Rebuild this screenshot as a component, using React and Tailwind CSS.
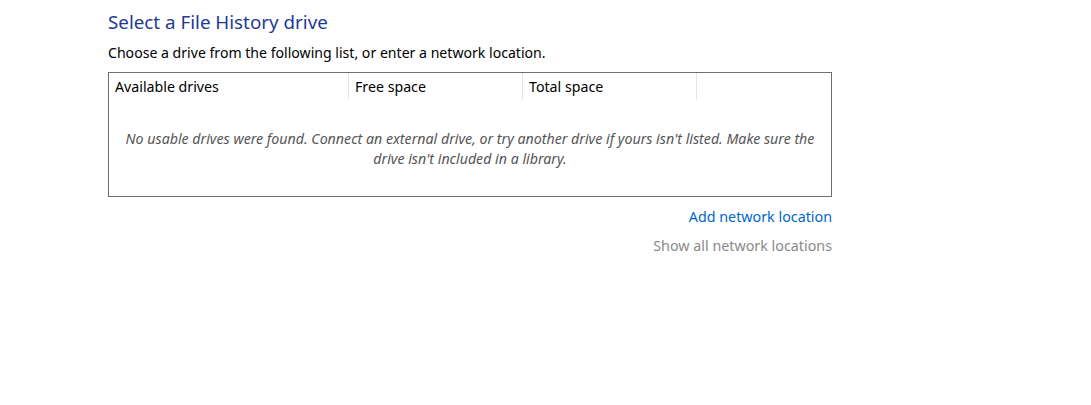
export default function App() {
  return (
    <main className="min-h-screen bg-white pl-[108px] pt-[9px] font-['Noto_Sans',sans-serif]">
      <div className="w-[724px]">
        <h1 className="text-[18.8px] leading-[26px] text-[#1e3a96]">
          Select a File History drive
        </h1>
        <p className="mt-[8px] text-[14.1px] leading-[20px] text-black">
          Choose a drive from the following list, or enter a network location.
        </p>

        {/* drive list */}
        <div className="mt-[9px] h-[125px] border border-[#6e6e6e]">
          <div className="flex h-[27px] text-[14.2px] text-black">
            <div className="flex w-[240px] items-center border-r border-[#e5e5e5] pl-[6px]">Available drives</div>
            <div className="flex w-[174px] items-center border-r border-[#e5e5e5] pl-[6px]">Free space</div>
            <div className="flex w-[174px] items-center border-r border-[#e5e5e5] pl-[6px]">Total space</div>
          </div>
          <p className="mt-[29px] px-[6px] text-center text-[14.2px] italic leading-[20px] text-[#555]">
            <span className="whitespace-nowrap">
              No usable drives were found. Connect an external drive, or try another drive if yours isn't listed. Make sure the
            </span>
            <br />
            drive isn't included in a library.
          </p>
        </div>

        <div className="mt-[10px] flex flex-col items-end text-[14.3px] leading-[20px]">
          <a className="text-[#0066cc]">Add network location</a>
          <a className="mt-[9px] text-[#8a8a8a]">Show all network locations</a>
        </div>
      </div>
    </main>
  );
}
